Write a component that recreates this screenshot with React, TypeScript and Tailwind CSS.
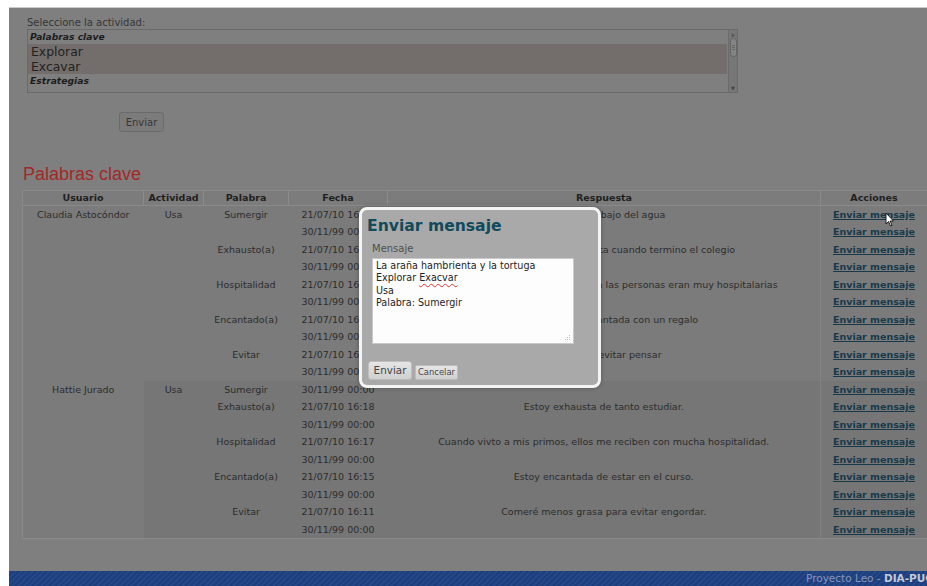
import React from 'react';

type Fila = { fecha: string; respuesta: string };
type Entrada = { palabra: string; filas: Fila[] };
type Grupo = { usuario: string; actividad: string; oscuro: boolean; entradas: Entrada[] };

const grupos: Grupo[] = [
  {
    usuario: 'Claudia Astocóndor',
    actividad: 'Usa',
    oscuro: false,
    entradas: [
      { palabra: 'Sumergir', filas: [{ fecha: '21/07/10 16:24', respuesta: 'Me sumergí bajo del agua' }, { fecha: '30/11/99 00:00', respuesta: '' }] },
      { palabra: 'Exhausto(a)', filas: [{ fecha: '21/07/10 16:23', respuesta: 'Siempre me siento exhausta cuando termino el colegio' }, { fecha: '30/11/99 00:00', respuesta: '' }] },
      { palabra: 'Hospitalidad', filas: [{ fecha: '21/07/10 16:22', respuesta: 'Cuando viajé a Cusco con mi familia las personas eran muy hospitalarias' }, { fecha: '30/11/99 00:00', respuesta: '' }] },
      { palabra: 'Encantado(a)', filas: [{ fecha: '21/07/10 16:21', respuesta: 'Mi mamá está encantada con un regalo' }, { fecha: '30/11/99 00:00', respuesta: '' }] },
      { palabra: 'Evitar', filas: [{ fecha: '21/07/10 16:20', respuesta: 'No es fácil evitar pensar' }, { fecha: '30/11/99 00:00', respuesta: '' }] },
    ],
  },
  {
    usuario: 'Hattie Jurado',
    actividad: 'Usa',
    oscuro: true,
    entradas: [
      { palabra: 'Sumergir', filas: [{ fecha: '30/11/99 00:00', respuesta: '' }] },
      { palabra: 'Exhausto(a)', filas: [{ fecha: '21/07/10 16:18', respuesta: 'Estoy exhausta de tanto estudiar.' }, { fecha: '30/11/99 00:00', respuesta: '' }] },
      { palabra: 'Hospitalidad', filas: [{ fecha: '21/07/10 16:17', respuesta: 'Cuando vivto a mis primos, ellos me reciben con mucha hospitalidad.' }, { fecha: '30/11/99 00:00', respuesta: '' }] },
      { palabra: 'Encantado(a)', filas: [{ fecha: '21/07/10 16:15', respuesta: 'Estoy encantada de estar en el curso.' }, { fecha: '30/11/99 00:00', respuesta: '' }] },
      { palabra: 'Evitar', filas: [{ fecha: '21/07/10 16:11', respuesta: 'Comeré menos grasa para evitar engordar.' }, { fecha: '30/11/99 00:00', respuesta: '' }] },
    ],
  },
];

const td = 'p-0 align-top text-center leading-[17.5px] whitespace-nowrap overflow-hidden';

function FilasGrupo({ grupo }: { grupo: Grupo }) {
  const total = grupo.entradas.reduce((n, e) => n + e.filas.length, 0);
  const fondo = grupo.oscuro ? 'bg-[#767676]' : 'bg-[#7b7b7b]';
  const filas: React.ReactNode[] = [];

  grupo.entradas.forEach((entrada, ei) => {
    entrada.filas.forEach((fila, fi) => {
      const primera = ei === 0 && fi === 0;
      filas.push(
        <tr key={`${ei}-${fi}`} className="h-[17.5px]">
          {primera && (
            <>
              <td rowSpan={total} className={`${td} bg-[#7b7b7b]`}>{grupo.usuario}</td>
              <td rowSpan={total} className={`${td} ${fondo}`}>{grupo.actividad}</td>
            </>
          )}
          {fi === 0 && (
            <td rowSpan={entrada.filas.length} className={`${td} ${fondo}`}>{entrada.palabra}</td>
          )}
          <td className={`${td} ${fondo}`}>{fila.fecha}</td>
          <td className={`${td} ${fondo}`}>{fila.respuesta}</td>
          <td className={`${td} ${fondo} border-l border-[#838383]`}>
            <a className="font-bold underline text-[#17394a]">Enviar mensaje</a>
          </td>
        </tr>
      );
    });
  });

  return <>{filas}</>;
}

function ListaActividades() {
  return (
    <div className="relative w-[711px] h-[64px] border border-[#696969] overflow-hidden">
      <div className="pr-[10px]">
        <div className="h-[14px] pl-[2px] text-[9.2px] font-bold italic leading-[14px] text-[#1c1c1c]">Palabras clave</div>
        <div className="h-[15px] pl-[3px] bg-[#736e6b] text-[12.4px] leading-[15px] text-[#222]">Explorar</div>
        <div className="h-[15px] pl-[3px] bg-[#736e6b] text-[12.4px] leading-[15px] text-[#222]">Excavar</div>
        <div className="h-[14px] pl-[2px] text-[9.2px] font-bold italic leading-[14px] text-[#1c1c1c]">Estrategias</div>
      </div>
      {/* barra de desplazamiento */}
      <div className="absolute right-0 top-0 bottom-0 w-[9px] bg-[#777] border-l border-[#6c6c6c] flex flex-col items-center">
        <div className="h-[8px] text-[5px] leading-[8px] text-[#555]">▲</div>
        <div className="w-[7px] h-[19px] rounded-[3px] bg-[#848484] border border-[#666] flex flex-col items-center justify-center gap-[1px]">
          <div className="w-[3px] h-px bg-[#666]" />
          <div className="w-[3px] h-px bg-[#666]" />
          <div className="w-[3px] h-px bg-[#666]" />
        </div>
        <div className="flex-1" />
        <div className="h-[8px] text-[5px] leading-[8px] text-[#444]">▼</div>
      </div>
    </div>
  );
}

function DialogoMensaje() {
  return (
    <div className="absolute left-[350px] top-[199px] w-[242px] h-[181px] rounded-[8px] border-[3px] border-[#f4f4f4] bg-[#a9a9a9] shadow-[0_0_4px_rgba(0,0,0,0.3)] flex flex-col">
      <div className="pl-[5px] pt-[7px] text-[15.6px] font-bold leading-[18px] text-[#104a5b]">Enviar mensaje</div>
      <div className="pl-[10px] mt-[8px] text-[10px] leading-[12px] text-[#4f4f4f]">Mensaje</div>
      <div className="relative ml-[10px] mt-[3px] w-[202px] h-[86px] bg-[#fdfdfd] border border-[#c9c9c9] pl-[3px] pt-[1px] text-[9.6px] leading-[12.3px] text-[#242424]">
        <div>La araña hambrienta y la tortuga</div>
        <div>
          Explorar <span className="underline decoration-wavy decoration-[#d33] decoration-1 underline-offset-2">Exacvar</span>
        </div>
        <div>Usa</div>
        <div>Palabra: Sumergir</div>
        <svg className="absolute right-[2px] bottom-[2px]" width="7" height="7" viewBox="0 0 7 7">
          <g fill="#b8b8b8">
            <rect x="5" y="1" width="1" height="1" />
            <rect x="3" y="3" width="1" height="1" />
            <rect x="5" y="3" width="1" height="1" />
            <rect x="1" y="5" width="1" height="1" />
            <rect x="3" y="5" width="1" height="1" />
            <rect x="5" y="5" width="1" height="1" />
          </g>
        </svg>
      </div>
      <div className="flex items-end gap-[3px] pl-[6px] mt-[17px]">
        <button className="w-[44px] h-[19px] rounded-[3px] border border-[#bdbdbd] bg-gradient-to-b from-[#e6e6e6] to-[#cfcfcf] text-[10.4px] leading-[17px] text-[#444]">
          Enviar
        </button>
        <button className="w-[43px] h-[15px] rounded-[2px] border border-[#bdbdbd] bg-gradient-to-b from-[#e6e6e6] to-[#cfcfcf] text-[8.4px] leading-[13px] text-[#444]">
          Cancelar
        </button>
      </div>
    </div>
  );
}

export default function App() {
  return (
    <div className="w-[927px] h-[586px] overflow-hidden bg-white pl-[9px] pt-[7px] flex flex-col font-['DejaVu_Sans',sans-serif]">
      <div className="relative flex-1 bg-[#7f7f7f] border-t border-[#cbcbcb] pl-[18px] pt-[9px]">
        <div className="text-[10px] leading-[12px] text-[#353535]">Seleccione la actividad:</div>
        <ListaActividades />

        <button className="ml-[92px] mt-[19px] w-[45px] h-[20px] rounded-[3px] border border-[#6b6b6b] bg-[#7b7b7b] text-[10px] text-[#373737]">
          Enviar
        </button>

        <h2 className="-ml-[4px] mt-[31px] text-[18px] leading-[21px] text-[#a32828] font-['Liberation_Sans',sans-serif]">
          Palabras clave
        </h2>

        <table className="-ml-[5px] mt-[5px] w-[905px] table-fixed border-collapse border border-[#8a8a8a] text-[9.5px] text-[#2c2c2c]">
          <colgroup>
            <col className="w-[121px]" />
            <col className="w-[60px]" />
            <col className="w-[85px]" />
            <col className="w-[99px]" />
            <col className="w-[433px]" />
            <col className="w-[107px]" />
          </colgroup>
          <thead>
            <tr className="h-[15px] bg-[#7c7c7c]">
              {['Usuario', 'Actividad', 'Palabra', 'Fecha', 'Respuesta', 'Acciones'].map((h) => (
                <th key={h} className="p-0 border border-[#8a8a8a] font-bold leading-[13px] text-[#1f1f1f]">
                  {h}
                </th>
              ))}
            </tr>
          </thead>
          <tbody>
            {grupos.map((g) => (
              <FilasGrupo key={g.usuario} grupo={g} />
            ))}
          </tbody>
        </table>

        <DialogoMensaje />

        {/* puntero del ratón sobre el primer enlace */}
        <svg className="absolute left-[876px] top-[204px]" width="10" height="15" viewBox="0 0 10 15">
          <path d="M1 1 L1 12 L3.5 9.5 L5.5 14 L7 13.3 L5 9 L8.5 9 Z" fill="#fff" stroke="#111" strokeWidth="0.9" strokeLinejoin="round" />
        </svg>
      </div>

      <footer className="h-[15px] shrink-0 bg-[repeating-linear-gradient(135deg,#24468a_0px,#24468a_2px,#1e3e7a_2px,#1e3e7a_4px)] pl-[797px] whitespace-nowrap text-[10.5px] leading-[15px]">
        <span className="text-[#8796bb]">Proyecto Leo - </span>
        <span className="font-bold text-[#c3c9d8]">DIA-PUC</span>
      </footer>
    </div>
  );
}
